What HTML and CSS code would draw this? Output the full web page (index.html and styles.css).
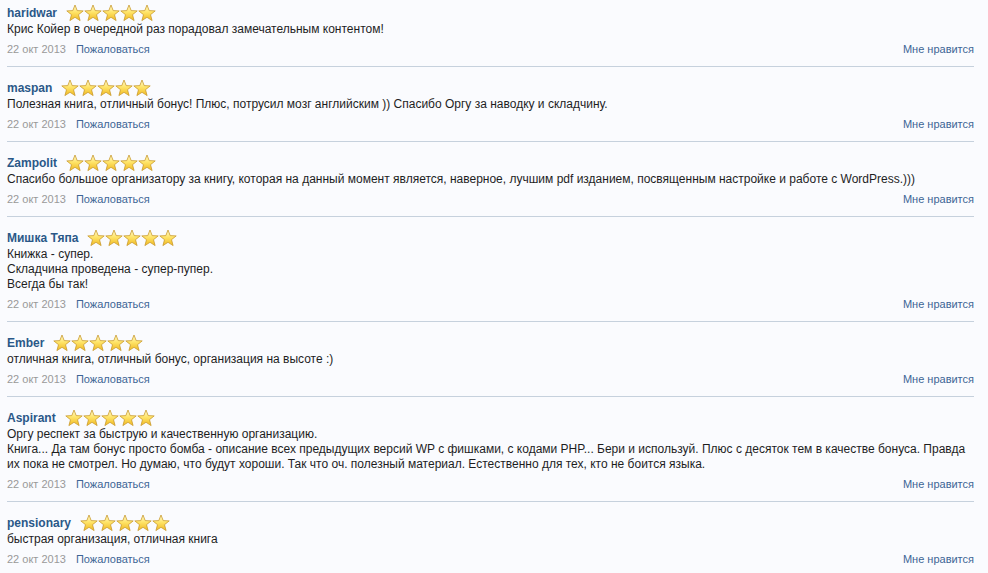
FILE: index.html
```html
<!DOCTYPE html>
<html lang="ru">
<head>
    <meta charset="UTF-8">
    <title>Отзывы</title>
    <meta name="viewport" content="width=device-width">
    <link rel="stylesheet" href="styles.css">
</head>
<body>
<svg width="0" height="0" class="defs">
  <defs>
    <linearGradient id="gold" x1="0" y1="0" x2="0" y2="1">
      <stop offset="0" stop-color="#fffbd8"/>
      <stop offset="0.45" stop-color="#ffe56a"/>
      <stop offset="1" stop-color="#f0b820"/>
    </linearGradient>
    <symbol id="star" viewBox="0 0 18 18">
      <path d="M9 1 L11.2 6.6 L17.2 6.9 L12.5 10.7 L14.1 16.6 L9 13.3 L3.9 16.6 L5.5 10.7 L0.8 6.9 L6.8 6.6 Z" fill="url(#gold)" stroke="#c99a2e" stroke-width="0.8" stroke-linejoin="round"/>
    </symbol>
  </defs>
</svg>

<div class="comments">

  <div class="comment">
    <div class="head"><a class="author" href="#">haridwar</a>
      <span class="stars"><svg><use href="#star"/></svg><svg><use href="#star"/></svg><svg><use href="#star"/></svg><svg><use href="#star"/></svg><svg><use href="#star"/></svg></span></div>
    <div class="text">Крис Койер в очередной раз порадовал замечательным контентом!</div>
    <div class="foot"><span class="date">22 окт 2013</span> <a href="#">Пожаловаться</a><a class="like" href="#">Мне нравится</a></div>
  </div>

  <div class="comment">
    <div class="head"><a class="author" href="#">maspan</a>
      <span class="stars"><svg><use href="#star"/></svg><svg><use href="#star"/></svg><svg><use href="#star"/></svg><svg><use href="#star"/></svg><svg><use href="#star"/></svg></span></div>
    <div class="text">Полезная книга, отличный бонус! Плюс, потрусил мозг английским )) Спасибо Оргу за наводку и складчину.</div>
    <div class="foot"><span class="date">22 окт 2013</span> <a href="#">Пожаловаться</a><a class="like" href="#">Мне нравится</a></div>
  </div>

  <div class="comment">
    <div class="head"><a class="author" href="#">Zampolit</a>
      <span class="stars"><svg><use href="#star"/></svg><svg><use href="#star"/></svg><svg><use href="#star"/></svg><svg><use href="#star"/></svg><svg><use href="#star"/></svg></span></div>
    <div class="text">Спасибо большое организатору за книгу, которая на данный момент является, наверное, лучшим pdf изданием, посвященным настройке и работе с WordPress.)))</div>
    <div class="foot"><span class="date">22 окт 2013</span> <a href="#">Пожаловаться</a><a class="like" href="#">Мне нравится</a></div>
  </div>

  <div class="comment">
    <div class="head"><a class="author" href="#">Мишка Тяпа</a>
      <span class="stars"><svg><use href="#star"/></svg><svg><use href="#star"/></svg><svg><use href="#star"/></svg><svg><use href="#star"/></svg><svg><use href="#star"/></svg></span></div>
    <div class="text">Книжка - супер.<br>Складчина проведена - супер-пупер.<br>Всегда бы так!</div>
    <div class="foot"><span class="date">22 окт 2013</span> <a href="#">Пожаловаться</a><a class="like" href="#">Мне нравится</a></div>
  </div>

  <div class="comment">
    <div class="head"><a class="author" href="#">Ember</a>
      <span class="stars"><svg><use href="#star"/></svg><svg><use href="#star"/></svg><svg><use href="#star"/></svg><svg><use href="#star"/></svg><svg><use href="#star"/></svg></span></div>
    <div class="text">отличная книга, отличный бонус, организация на высоте :)</div>
    <div class="foot"><span class="date">22 окт 2013</span> <a href="#">Пожаловаться</a><a class="like" href="#">Мне нравится</a></div>
  </div>

  <div class="comment">
    <div class="head"><a class="author" href="#">Aspirant</a>
      <span class="stars"><svg><use href="#star"/></svg><svg><use href="#star"/></svg><svg><use href="#star"/></svg><svg><use href="#star"/></svg><svg><use href="#star"/></svg></span></div>
    <div class="text">Оргу респект за быструю и качественную организацию.<br>Книга... Да там бонус просто бомба - описание всех предыдущих версий WP с фишками, с кодами PHP... Бери и используй. Плюс с десяток тем в качестве бонуса. Правда их пока не смотрел. Но думаю, что будут хороши. Так что оч. полезный материал. Естественно для тех, кто не боится языка.</div>
    <div class="foot"><span class="date">22 окт 2013</span> <a href="#">Пожаловаться</a><a class="like" href="#">Мне нравится</a></div>
  </div>

  <div class="comment">
    <div class="head"><a class="author" href="#">pensionary</a>
      <span class="stars"><svg><use href="#star"/></svg><svg><use href="#star"/></svg><svg><use href="#star"/></svg><svg><use href="#star"/></svg><svg><use href="#star"/></svg></span></div>
    <div class="text">быстрая организация, отличная книга</div>
    <div class="foot"><span class="date">22 окт 2013</span> <a href="#">Пожаловаться</a><a class="like" href="#">Мне нравится</a></div>
  </div>

</div>
</body>
</html>
```

FILE: styles.css
```css
body {
  margin: 0;
  background: #fafbfe;
  font-family: "Liberation Sans", Arial, sans-serif;
  font-size: 12px;
  color: #1e1e1e;
}

a {
  color: #3d6595;
  text-decoration: none;
}

.defs {
  position: absolute;
}

.comments {
  padding: 0 14px 0 7px;
}

.comment {
  padding: 12px 0 9px;
  border-bottom: 1px solid #c6d1dd;
}

.comment:first-child {
  padding-top: 4px;
}

.head {
  display: flex;
  align-items: center;
  height: 18px;
}

.author {
  font-weight: bold;
  color: #2a5888;
  margin-right: 9px;
}

.stars {
  display: flex;
}

.stars svg {
  width: 18px;
  height: 18px;
}

.text {
  line-height: 15px;
}

.foot {
  display: flex;
  margin-top: 5px;
  font-size: 11px;
  line-height: 15px;
}

.date {
  color: #999;
  margin-right: 10px;
}

.like {
  margin-left: auto;
}
```
